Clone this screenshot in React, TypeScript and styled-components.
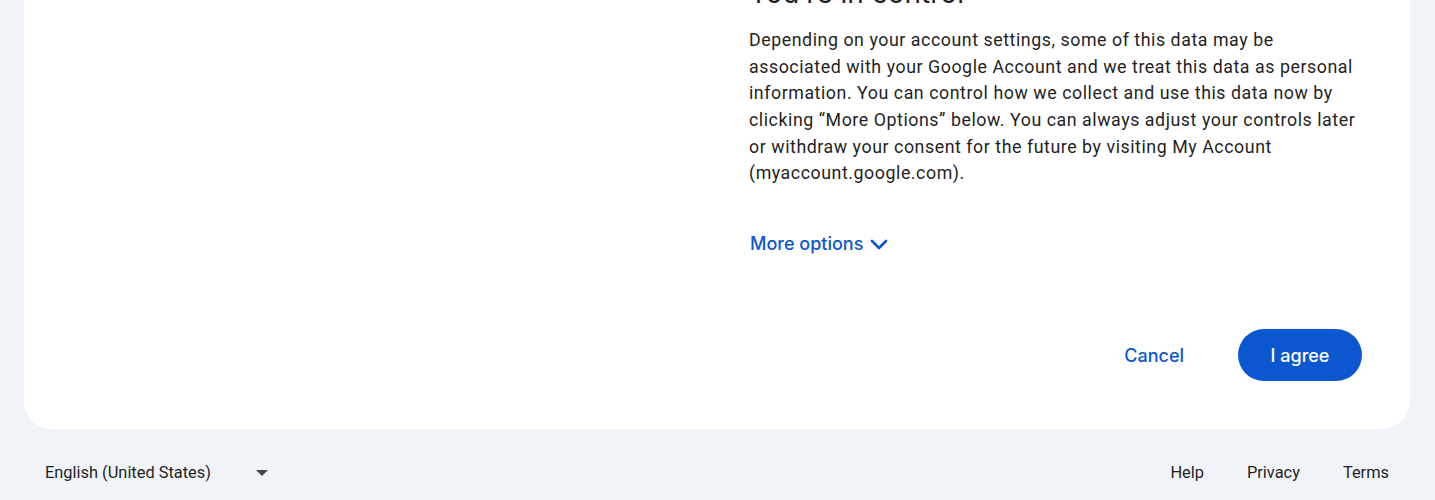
import React from "react";
import styled, { createGlobalStyle } from "styled-components";

const Global = createGlobalStyle`
  html, body { margin: 0; padding: 0; background: #f0f4f9; }
  body { font-family: Roboto, "Noto Sans", Arial, sans-serif; color: #1f1f1f; overflow: hidden; }
  * { box-sizing: border-box; }
`;

const Page = styled.div`
  padding: 0 25px 0 24px;
  margin-top: -65px;
`;

const Card = styled.main`
  background: #ffffff;
  border-radius: 28px;
  padding: 40px 48px 48px 48px;
  display: grid;
  grid-template-columns: 1fr 613px;
`;

const LeftCol = styled.div``;

const RightCol = styled.section`
  display: flex;
  flex-direction: column;
`;

const Heading = styled.h2`
  margin: 0 0 16px 0;
  font-family: Inter, "Open Sans", sans-serif;
  font-size: 28px;
  line-height: 36px;
  font-weight: 400;
  color: #1f1f1f;
`;

const Paragraph = styled.p`
  margin: 0;
  font-family: Roboto, "Open Sans", Arial, sans-serif;
  font-size: 17.8px;
  line-height: 26.67px;
  color: #1f1f1f;
  letter-spacing: 0.55px;
`;

const MoreOptions = styled.button`
  margin-top: 45px;
  align-self: flex-start;
  display: inline-flex;
  align-items: center;
  gap: 7px;
  background: none;
  border: none;
  padding: 0 0 0 1px;
  font-family: Inter, "Open Sans", sans-serif;
  font-weight: 500;
  font-size: 18px;
  line-height: 24px;
  color: #0b57d0;
  cursor: pointer;
`;

const Actions = styled.div`
  margin-top: 73px;
  display: flex;
  justify-content: flex-end;
  align-items: center;
  gap: 30px;
`;

const Button = styled.button<{ $primary?: boolean }>`
  height: 52px;
  border: none;
  border-radius: 26px;
  padding: 0 ${(p) => (p.$primary ? "31px" : "24px")};
  min-width: ${(p) => (p.$primary ? "124px" : "auto")};
  font-family: Inter, "Open Sans", sans-serif;
  font-weight: 500;
  font-size: 18px;
  background: ${(p) => (p.$primary ? "#0b57d0" : "transparent")};
  color: ${(p) => (p.$primary ? "#ffffff" : "#0b57d0")};
  cursor: pointer;
`;

const Footer = styled.footer`
  display: flex;
  justify-content: space-between;
  align-items: center;
  height: 86px;
  padding: 0 21px 0 21px;
`;

const LangSelect = styled.div`
  display: flex;
  align-items: center;
  font-size: 16.4px;
  color: #1f1f1f;
`;

const LangLabel = styled.span`
  width: 211px;
`;

const Arrow = styled.span`
  width: 0;
  height: 0;
  border-left: 6px solid transparent;
  border-right: 6px solid transparent;
  border-top: 6px solid #444746;
  margin-top: 2px;
`;

const Links = styled.nav`
  display: flex;
  gap: 43px;
`;

const FootLink = styled.a`
  font-size: 16.4px;
  color: #1f1f1f;
  text-decoration: none;
`;

export default function App() {
  return (
    <>
      <Global />
      <Page>
        <Card>
          <LeftCol />
          <RightCol>
            <Heading>You’re in control</Heading>
            <Paragraph>
              Depending on your account settings, some of this data may be
              associated with your Google Account and we treat this data as
              personal information. You can control how we collect and use this
              data now by clicking “More Options” below. You can always adjust
              your controls later or withdraw your consent for the future by
              visiting My Account (myaccount.google.com).
            </Paragraph>
            <MoreOptions>
              More options
              <svg width="18" height="11" viewBox="0 0 18 11" aria-hidden>
                <polyline
                  points="2,2 9,9 16,2"
                  fill="none"
                  stroke="#0b57d0"
                  strokeWidth="2.6"
                  strokeLinecap="round"
                  strokeLinejoin="round"
                />
              </svg>
            </MoreOptions>
            <Actions>
              <Button>Cancel</Button>
              <Button $primary>I agree</Button>
            </Actions>
          </RightCol>
        </Card>
        <Footer>
          <LangSelect>
            <LangLabel>English (United States)</LangLabel>
            <Arrow />
          </LangSelect>
          <Links>
            <FootLink href="#">Help</FootLink>
            <FootLink href="#">Privacy</FootLink>
            <FootLink href="#">Terms</FootLink>
          </Links>
        </Footer>
      </Page>
    </>
  );
}
